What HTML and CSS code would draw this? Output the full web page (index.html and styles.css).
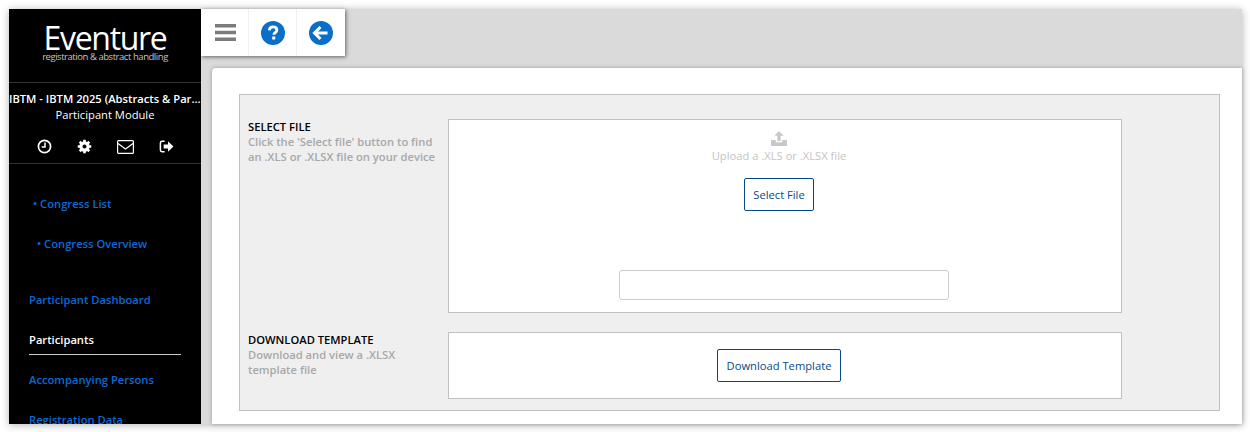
FILE: index.html
```html
<!DOCTYPE html>
<html lang="en">
<head>
<meta charset="utf-8">
<title>Eventure</title>
<link rel="stylesheet" href="styles.css">
</head>
<body>
<div class="window">
  <aside class="sidebar">
    <div class="logo">
      <div class="logo-name">Eventure</div>
      <div class="logo-tag">registration &amp; abstract handling</div>
    </div>
    <div class="module">
      <div class="congress">IBTM - IBTM 2025 (Abstracts &amp; Participants)</div>
      <div class="module-name">Participant Module</div>
      <div class="side-icons">
        <svg class="side-icon" viewBox="0 0 16 16"><circle cx="8" cy="8" r="6.500" fill="none" stroke="#fff" stroke-width="1.800"/><path d="M8.500 3.800v4.800H5" fill="none" stroke="#fff" stroke-width="1.600"/></svg>
        <svg class="side-icon" viewBox="0 0 16 16"><circle cx="8" cy="8" r="4" fill="none" stroke="#fff" stroke-width="3"/><path d="M8 .8v14.400M.8 8h14.400M2.900 2.900l10.200 10.200M13.100 2.900L2.900 13.100" stroke="#fff" stroke-width="2.800"/><circle cx="8" cy="8" r="2.100" fill="#000"/></svg>
        <svg class="side-icon mail" viewBox="0 0 17 14"><rect x=".6" y=".6" width="15.800" height="12.800" rx="1" fill="none" stroke="#fff" stroke-width="1.200"/><path d="M1 3.400l7.500 5.600L16 3.400" fill="none" stroke="#fff" stroke-width="1.200"/></svg>
        <svg class="side-icon" viewBox="0 0 16 16"><path d="M6 2.500H3.200C2.200 2.500 1.500 3.200 1.500 4.200v7.600c0 1 .7 1.700 1.700 1.700H6" fill="none" stroke="#fff" stroke-width="1.600"/><path d="M5 5.800h4.600V2.400L15.400 8l-5.800 5.600v-3.400H5z" fill="#fff"/></svg>
      </div>
    </div>
    <nav class="nav">
      <a class="sub sub-one" href="#">• Congress List</a>
      <a class="sub sub-two" href="#">• Congress Overview</a>
      <a class="main-link first" href="#">Participant Dashboard</a>
      <a class="main-link current" href="#">Participants</a>
      <a class="main-link" href="#">Accompanying Persons</a>
      <a class="main-link" href="#">Registration Data</a>
    </nav>
  </aside>
  <main class="main">
    <div class="toolbar">
      <button class="tool" type="button" aria-label="Menu">
        <svg class="bars" viewBox="0 0 21 17"><path d="M0 0h21v3.400H0zM0 6.800h21v3.400H0zM0 13.600h21V17H0z" fill="#7b7b7b"/></svg>
      </button>
      <button class="tool" type="button" aria-label="Help">
        <svg class="round" viewBox="0 0 24 24"><circle cx="12" cy="12" r="12" fill="#0a6fc9"/><path d="M8.200 9.300c.2-2.300 1.700-3.400 3.900-3.400 2.300 0 3.800 1.300 3.800 3.100 0 2.500-3 2.700-3 4.700" fill="none" stroke="#fff" stroke-width="2.800"/><rect x="11.200" y="15.500" width="3.100" height="3" fill="#fff"/></svg>
      </button>
      <button class="tool" type="button" aria-label="Back">
        <svg class="round" viewBox="0 0 24 24"><circle cx="12" cy="12" r="12" fill="#0a6fc9"/><path d="M11.500 6L5.500 12l6 6M6.500 12h12" fill="none" stroke="#fff" stroke-width="3"/></svg>
      </button>
    </div>
    <section class="content">
      <div class="panel">
        <div class="row row-upload">
          <div class="label">
            <div class="label-title">SELECT FILE</div>
            <div class="label-text">Click the 'Select file' button to find an .XLS or .XLSX file on your device</div>
          </div>
          <div class="box upload-box">
            <svg class="upload-icon" viewBox="0 0 16 15"><path d="M8 0l4.600 4.800H9.700v5.200H6.300V4.800H3.400z" fill="#c8c8c8"/><path d="M0 9h4.800v2.200h6.400V9H16v6H0z" fill="#c8c8c8"/></svg>
            <div class="upload-text">Upload a .XLS or .XLSX file</div>
            <button class="btn btn-select" type="button">Select File</button>
            <input class="file-name" type="text" aria-label="File name">
          </div>
        </div>
        <div class="row row-download">
          <div class="label">
            <div class="label-title">DOWNLOAD TEMPLATE</div>
            <div class="label-text">Download and view a .XLSX template file</div>
          </div>
          <div class="box download-box">
            <button class="btn btn-download" type="button">Download Template</button>
          </div>
        </div>
      </div>
    </section>
  </main>
</div>
</body>
</html>
```
FILE: styles.css
```css
* { box-sizing: border-box; }
html, body { height: 100%; }
body {
  margin: 0;
  padding: 9px 8px 8px 9px;
  background: #fff;
  overflow: hidden;
  font-family: "Open Sans", "Liberation Sans", sans-serif;
}
.window {
  display: flex;
  height: 415px;
  background: #dadada;
  box-shadow: 0 1px 8px rgba(0, 0, 0, .3);
}
.sidebar {
  width: 192px;
  flex: none;
  height: 415px;
  background: #000;
  color: #fff;
  overflow: hidden;
}
.logo {
  height: 74px;
  padding-top: 14px;
  text-align: center;
  border-bottom: 1px solid #333;
}
.logo-name {
  font-size: 32px;
  font-weight: 500;
  line-height: 30px;
  letter-spacing: -1.300px;
  color: #fff;
}
.logo-tag {
  font-size: 9.500px;
  line-height: 8px;
  letter-spacing: -.45px;
  color: #c4c4c4;
}
.module {
  height: 81px;
  padding-top: 8px;
  border-bottom: 1px solid #333;
  text-align: center;
}
.congress {
  font-size: 11.200px;
  font-weight: 600;
  line-height: 16px;
  white-space: nowrap;
  overflow: hidden;
  text-overflow: ellipsis;
}
.module-name {
  font-size: 11.200px;
  line-height: 16px;
}
.side-icons {
  display: flex;
  justify-content: center;
  align-items: center;
  gap: 25px;
  margin-top: 16px;
}
.side-icon { width: 15px; height: 15px; }
.mail { width: 17px; height: 14px; }
.nav { display: flex; flex-direction: column; }
.nav a {
  display: block;
  font-size: 11.200px;
  font-weight: 600;
  line-height: 16px;
  color: #0a6ad8;
  text-decoration: none;
  white-space: nowrap;
}
.sub-one { margin: 32px 0 0 24px; }
.sub-two { margin: 24px 0 0 28px; }
.main-link { margin: 24px 20px 0; }
.main-link.first { margin-top: 40px; }
.nav .current { color: #fff; padding-bottom: 6px; border-bottom: 1px solid #ccc; }
.nav .current + .main-link { margin-top: 17px; }
.main {
  flex: 1;
  min-width: 0;
  display: flex;
  flex-direction: column;
  align-items: flex-start;
}
.toolbar {
  display: flex;
  height: 47px;
  background: #fff;
  box-shadow: 1px 1px 4px rgba(0, 0, 0, .55);
  position: relative;
  z-index: 1;
}
.tool {
  width: 48px;
  padding: 0;
  border: 0;
  border-right: 1px solid #f0f0f0;
  background: transparent;
  display: flex;
  align-items: center;
  justify-content: center;
}
.tool:last-child { border-right: 0; }
.bars { width: 21px; height: 17px; margin-left: 1px; }
.round { width: 24px; height: 24px; }
.content {
  align-self: stretch;
  flex: 1;
  margin: 12px 0 0 11px;
  padding: 26px 22px 0 27px;
  background: #fff;
  border-radius: 4px 0 0 0;
  box-shadow: 0 0 4px rgba(0, 0, 0, .3);
}
.panel {
  height: 317px;
  padding: 24px 97px 0 8px;
  background: #efefef;
  border: 1px solid #c0c0c0;
}
.row { display: flex; }
.row-upload { height: 194px; }
.row-download { margin-top: 19px; height: 67px; }
.label { width: 200px; flex: none; }
.label-title {
  font-size: 11.200px;
  font-weight: 600;
  line-height: 15px;
  color: #000;
}
.label-text {
  font-size: 11.200px;
  font-weight: 600;
  line-height: 15px;
  color: #a8a8a8;
  width: 196px;
}
.box {
  flex: 1;
  background: #fff;
  border: 1px solid #c0c0c0;
  display: flex;
  flex-direction: column;
  align-items: center;
  padding-right: 12px;
}
.upload-box { padding-top: 11px; }
.upload-icon { width: 16px; height: 15px; }
.upload-text {
  margin-top: 2px;
  font-size: 11.200px;
  line-height: 15px;
  color: #c4c4c4;
}
.btn {
  font-family: inherit;
  font-size: 11.200px;
  color: #034a8c;
  background: #fff;
  border: 1px solid #034a8c;
  border-radius: 2px;
  padding: 0;
}
.btn-select { width: 70px; height: 33px; margin-top: 15px; }
.file-name {
  width: 330px;
  height: 30px;
  margin: 59px 0 0 10px;
  background: #fff;
  border: 1px solid #ccc;
  border-radius: 3px;
}
.download-box { padding-top: 16px; }
.btn-download { width: 124px; height: 33px; }
```
